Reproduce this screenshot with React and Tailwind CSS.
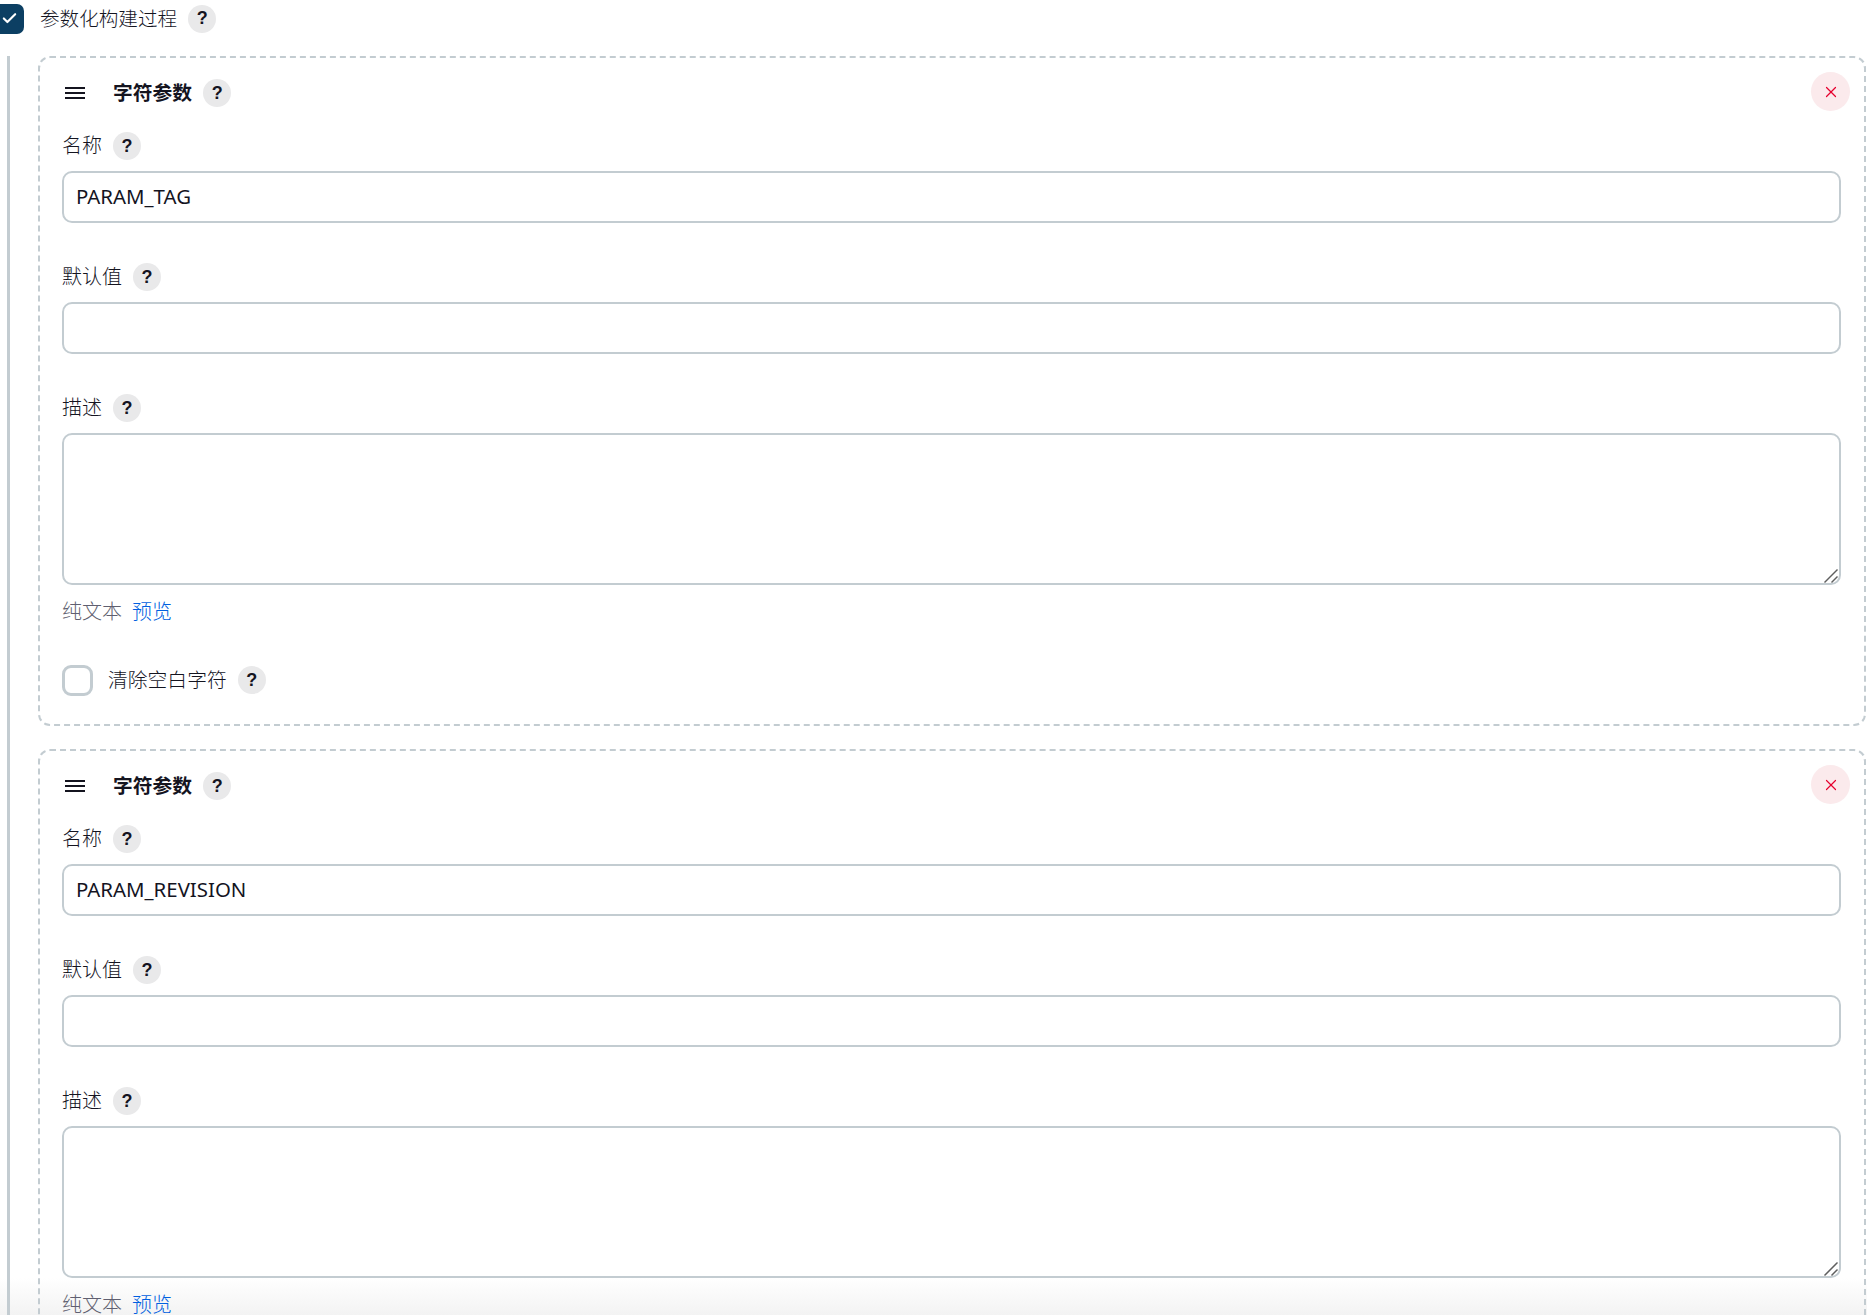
import { Check, X } from 'lucide-react'

const font = 'font-["Noto_Sans","Noto_Sans_CJK_SC",sans-serif]'

function Help() {
  return (
    <span className="flex h-[28px] w-[28px] shrink-0 items-center justify-center rounded-full bg-[#e9e9ea] font-['Liberation_Sans',sans-serif] text-[18px] font-bold text-[#14141f]">
      ?
    </span>
  )
}

function FieldLabel({ label }) {
  return (
    <div className="flex h-[28px] items-center gap-[11px]">
      <span className="text-[20px] font-light leading-[28px] text-[#14141f]">{label}</span>
      <Help />
    </div>
  )
}

function TextInput({ value }) {
  return (
    <div className="flex h-[52px] items-center rounded-[10px] border-2 border-[#c3ccd1] bg-white px-[12px] pb-[2px] text-[20.4px] text-[#14141f]">
      {value}
    </div>
  )
}

function ResizeHandle() {
  return (
    <svg className="absolute bottom-[-1px] right-0" width="16" height="16" viewBox="0 0 16 16" fill="none" stroke="#5f5f5f" strokeWidth="1.5">
      <path d="M1.5 14.5 L14.5 1.5" />
      <path d="M8.5 14.5 L14.5 8.5" />
    </svg>
  )
}

function ParamCard({ name }) {
  return (
    <div className="relative h-[670px] rounded-[12px] border-2 border-dashed border-[#c3ccd1] pl-[22px] pr-[23px] pt-[21px]">
      <button className="absolute right-[14px] top-[14px] flex h-[39px] w-[39px] items-center justify-center rounded-full bg-[#fbeaec] text-[#e6002e]">
        <X size={18} strokeWidth={1.6} />
      </button>

      <div className="flex h-[28px] items-center">
        <svg className="ml-[3px]" width="20" height="12" viewBox="0 0 20 12" fill="none" stroke="#14141f" strokeWidth="2">
          <path d="M0 1 H20 M0 6 H20 M0 11 H20" />
        </svg>
        <span className="ml-[28px] text-[19.8px] font-bold leading-[28px] text-[#14141f]">字符参数</span>
        <span className="ml-[11px]">
          <Help />
        </span>
      </div>

      <div className="mt-[25px]">
        <FieldLabel label="名称" />
      </div>
      <div className="mt-[11px]">
        <TextInput value={name} />
      </div>

      <div className="mt-[40px]">
        <FieldLabel label="默认值" />
      </div>
      <div className="mt-[11px]">
        <TextInput value="" />
      </div>

      <div className="mt-[40px]">
        <FieldLabel label="描述" />
      </div>
      <div className="relative mt-[11px] h-[152px] rounded-[10px] border-2 border-[#c3ccd1] bg-white">
        <ResizeHandle />
      </div>

      <div className="mt-[13px] flex h-[28px] items-center gap-[10px] text-[20px] font-light leading-[28px]">
        <span className="text-[#5f5f70]">纯文本</span>
        <span className="text-[#0060e0]">预览</span>
      </div>

      <div className="mt-[39px] flex h-[30px] items-center">
        <span className="h-[31px] w-[31px] rounded-[9px] border-[3px] border-[#c3ccd1] bg-white" />
        <span className="ml-[15px] text-[19.8px] font-light leading-[28px] text-[#14141f]">清除空白字符</span>
        <span className="ml-[11px]">
          <Help />
        </span>
      </div>
    </div>
  )
}

export default function App() {
  return (
    <div className={`relative h-[1315px] overflow-hidden bg-white ${font}`}>
      <div className="absolute bottom-0 left-0 right-0 h-[37px] bg-gradient-to-b from-white to-[#f3f3f3]" />

      <div className="relative">
        <div className="flex h-[36px] items-center pt-[1px]">
          <span className="ml-[-6px] flex h-[30px] w-[30px] items-center justify-center rounded-[7px] bg-[#0c3f63] text-white">
            <Check size={17} strokeWidth={3} />
          </span>
          <span className="ml-[16px] text-[19.6px] font-light leading-[28px] text-[#14141f]">参数化构建过程</span>
          <span className="ml-[11px]">
            <Help />
          </span>
        </div>

        <div className="ml-[7px] mt-[20px] flex flex-col gap-[23px] border-l-[3px] border-[#c3ccd1] pl-[28px] pr-[1px]">
          <ParamCard name="PARAM_TAG" />
          <ParamCard name="PARAM_REVISION" />
        </div>
      </div>
    </div>
  )
}
